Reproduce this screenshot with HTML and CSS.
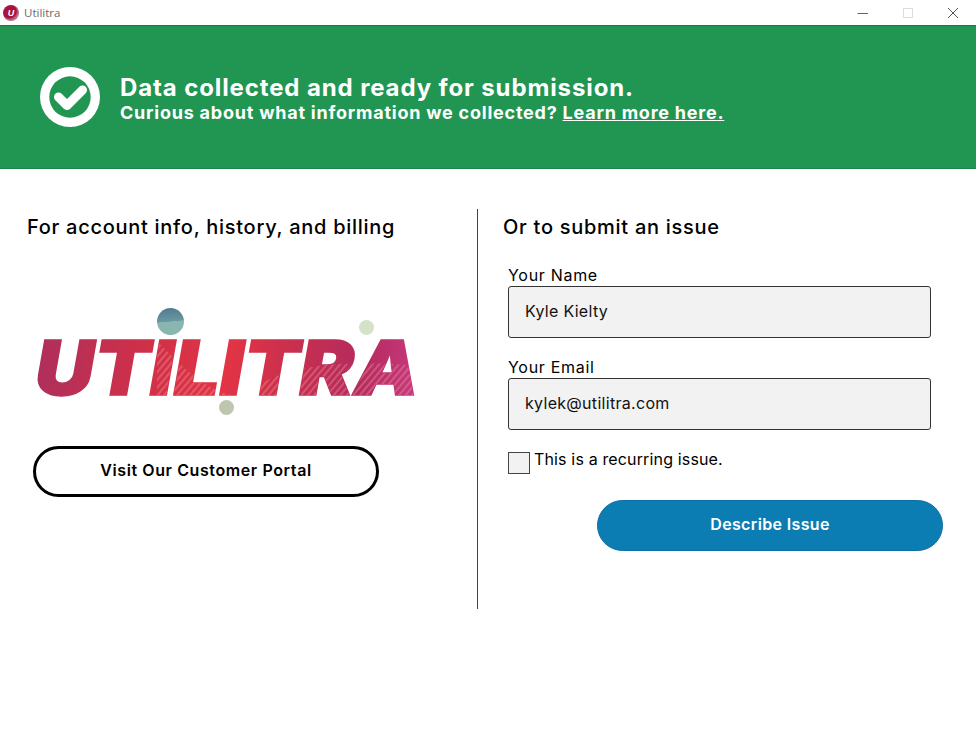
FILE: index.html
```html
<!DOCTYPE html>
<html lang="en">
<head>
<meta charset="utf-8">
<title>Utilitra</title>
<link rel="stylesheet" href="styles.css">
</head>
<body>
<div class="app">
  <header class="titlebar">
    <div class="app-id">
      <span class="app-icon"><span class="app-icon-letter">U</span></span>
      <span class="app-name">Utilitra</span>
    </div>
    <div class="win-controls">
      <svg class="win-btn" width="12" height="12" viewBox="0 0 12 12"><path d="M0.5 6.5h10.5" stroke="#666" fill="none"/></svg>
      <svg class="win-btn" width="12" height="12" viewBox="0 0 12 12"><rect x="1.5" y="1.5" width="9" height="9" stroke="#dcdcdc" fill="none"/></svg>
      <svg class="win-btn" width="12" height="12" viewBox="0 0 12 12"><path d="M1 1l10 10M11 1L1 11" stroke="#555" fill="none"/></svg>
    </div>
  </header>

  <section class="banner">
    <svg class="banner-icon" width="60" height="60" viewBox="0 0 60 60">
      <circle cx="30" cy="30" r="30" fill="#fff"/>
      <circle cx="30" cy="30" r="20.7" fill="#219653"/>
      <path d="M18.5 30l8.5 8.5 15.5-15.5" fill="none" stroke="#fff" stroke-width="9" stroke-linecap="round" stroke-linejoin="round"/>
    </svg>
    <div class="banner-text">
      <div class="banner-title">Data collected and ready for submission.</div>
      <div class="banner-sub">Curious about what information we collected? <a class="banner-link" href="#">Learn more here.</a></div>
    </div>
  </section>

  <main class="columns">
    <section class="col-left">
      <h2 class="heading">For account info, history, and billing</h2>
      <div class="logo">
        <svg class="logo-art" width="400" height="126" viewBox="0 0 400 126">
          <defs>
            <linearGradient id="logoFill" gradientUnits="userSpaceOnUse" x1="11" y1="33" x2="388" y2="88">
              <stop offset="0" stop-color="#ae2f5c"/>
              <stop offset="0.28" stop-color="#cf3049"/>
              <stop offset="0.5" stop-color="#e23444"/>
              <stop offset="0.68" stop-color="#c62f50"/>
              <stop offset="0.85" stop-color="#b52b5e"/>
              <stop offset="1" stop-color="#c73a80"/>
            </linearGradient>
            <pattern id="logoHatch" width="5" height="5" patternUnits="userSpaceOnUse" patternTransform="rotate(40)">
              <rect width="2" height="5" fill="#f7a0a0" opacity="0.35"/>
            </pattern>
            <clipPath id="logoClip">
              <use href="#logoWord"/>
            </clipPath>
          </defs>
          <text id="logoWord" class="logo-word" x="8" y="87" textLength="384" lengthAdjust="spacingAndGlyphs">UTILITRA</text>
          <path d="M130 33 C165 70 190 88 214 88 L130 88 Z M215 88 C250 60 300 50 392 58 L392 88 Z" fill="url(#logoHatch)" clip-path="url(#logoClip)"/>
        </svg>
        <span class="ball ball-blue"></span>
        <span class="ball ball-green"></span>
        <span class="ball ball-grey"></span>
      </div>
      <a class="portal-btn" href="#">Visit Our Customer Portal</a>
    </section>

    <section class="col-right">
      <h2 class="heading">Or to submit an issue</h2>
      <form class="form">
        <label class="field">
          <span class="field-label">Your Name</span>
          <input class="field-input" type="text" value="Kyle Kielty">
        </label>
        <label class="field">
          <span class="field-label">Your Email</span>
          <input class="field-input" type="text" value="kylek@utilitra.com">
        </label>
        <label class="check">
          <span class="check-box"></span>
          <span class="check-label">This is a recurring issue.</span>
        </label>
        <div class="actions">
          <button class="submit-btn" type="button">Describe Issue</button>
        </div>
      </form>
    </section>
  </main>
</div>
</body>
</html>
```
FILE: styles.css
```css
* { box-sizing: border-box; }
html, body { margin: 0; padding: 0; background: #fff; }
body { font-family: "Inter", "DejaVu Sans", sans-serif; color: #000; }
.app { width: 976px; height: 729px; overflow: hidden; display: flex; flex-direction: column; }

.titlebar { height: 25px; flex: none; display: flex; justify-content: space-between; align-items: center; padding-left: 3px; background: #fff; }
.app-id { display: flex; align-items: center; gap: 5px; }
.app-icon { width: 16px; height: 16px; border-radius: 50%; display: flex; align-items: center; justify-content: center; background: radial-gradient(circle at 40% 38%, #a8123f 0 48%, #b5657d 62%, #b9b9b9 100%); }
.app-icon-letter { font: italic 700 9px "Liberation Sans", sans-serif; color: #fff; }
.app-name { font: 11.5px "Open Sans", sans-serif; color: #6b6b6b; }
.win-controls { display: flex; gap: 33px; padding-right: 17px; }
.win-btn { display: block; }

.banner { height: 144px; flex: none; display: flex; align-items: center; gap: 20px; padding: 0 0 0 40px; background: #219653; border-top: 1px solid #187a42; border-bottom: 1px solid #1b8547; color: #fff; }
.banner-icon { flex: none; }
.banner-text { display: flex; flex-direction: column; margin-top: 4px; }
.banner-title { font-size: 24px; font-weight: 700; line-height: 27px; letter-spacing: 0.88px; }
.banner-sub { font-size: 18px; font-weight: 700; line-height: 23px; letter-spacing: 0.77px; }
.banner-link { color: #fff; text-decoration: underline; }

.columns { display: flex; padding-top: 40px; align-items: flex-start; }
.heading { margin: 0; font-size: 20px; font-weight: 550; line-height: 36px; letter-spacing: 0.72px; }

.col-left { width: 478px; height: 400px; padding-left: 27px; border-right: 1px solid #444; }
.logo { position: relative; width: 400px; height: 126px; margin-top: 63px; }
.logo-art { display: block; }
.logo-word { font-family: "Inter", "Liberation Sans", sans-serif; font-style: italic; font-weight: 900; font-size: 75px; fill: url(#logoFill); stroke: url(#logoFill); stroke-width: 1.5px; }
.ball { position: absolute; border-radius: 50%; }
.ball-blue { left: 130px; top: 0; width: 27px; height: 27px; background: linear-gradient(175deg, #4e7a90 0%, #6a97a1 49%, #8ab6b2 51%, #88b5ab 100%); }
.ball-green { left: 332px; top: 12px; width: 15px; height: 15px; background: #d3e2c9; }
.ball-grey { left: 192px; top: 92px; width: 15px; height: 15px; background: #bfc6b0; }

.portal-btn { display: flex; align-items: center; justify-content: center; width: 346px; height: 51px; margin: 12px 0 0 6px; padding-bottom: 3px; border: 3px solid #000; border-radius: 26px; background: #fff; color: #000; text-decoration: none; font-size: 16px; font-weight: 600; letter-spacing: 0.6px; }

.col-right { width: 498px; padding-left: 25px; }
.form { display: flex; flex-direction: column; padding-left: 5px; padding-top: 20px; }
.field { display: flex; flex-direction: column; margin-bottom: 19px; }
.field-label { font-size: 16px; line-height: 20px; letter-spacing: 0.7px; height: 21px; }
.field-input { width: 423px; height: 52px; padding: 0 16px 2px; border: 1px solid #333; border-radius: 3px; background: #f2f2f2; font: 16px "Inter", sans-serif; letter-spacing: 0.3px; color: #111; outline: none; }
.check { display: flex; align-items: flex-start; gap: 4px; }
.check-box { width: 22px; height: 22px; border: 1px solid #444; background: #f2f2f2; margin-top: 3px; }
.check-label { font-size: 16px; line-height: 20px; letter-spacing: 0.15px; }
.actions { display: flex; justify-content: flex-end; width: 435px; margin-top: 26px; }
.submit-btn { width: 346px; height: 51px; padding: 0 0 4px; border: 1px solid #0a6fa3; border-radius: 26px; background: #0c7db3; color: #fff; font: 600 16px "Inter", sans-serif; letter-spacing: 0.35px; }
```
